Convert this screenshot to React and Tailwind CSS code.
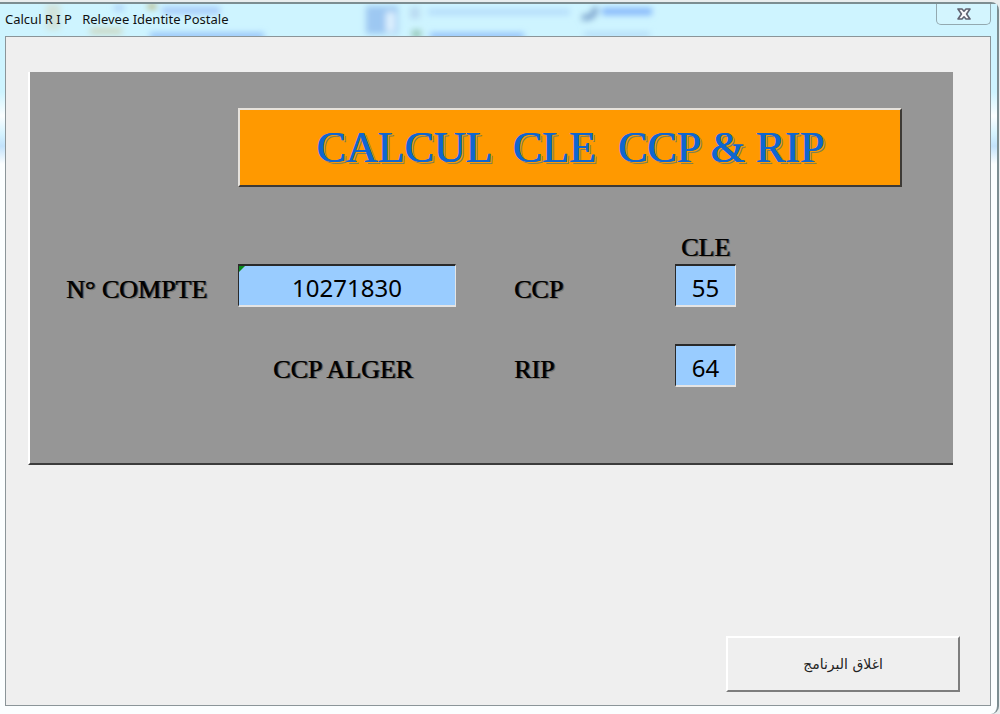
import { useState } from 'react'

const labelClass =
  "font-['Liberation_Serif',serif] text-[26px] leading-8 text-black whitespace-nowrap [text-shadow:1px_0_0_#222,2px_1px_0_#7b7670]"
const cellClass =
  "block h-[43px] w-full min-w-0 rounded-none border border-t-2 border-b-2 border-t-[#2a2a2a] border-l-[#2a2a2a] border-r-[#e4e4e4] border-b-[#e4e4e4] bg-[#99ccff] pt-1 text-center font-['Noto_Sans',sans-serif] text-[24px] leading-8 text-black outline-none"

// cle CCP : somme des chiffres x (position + 4), modulo 100
function cleCcp(compte) {
  const sum = [...compte].reverse().reduce((acc, d, i) => acc + Number(d) * (i + 4), 0)
  return String(sum % 100).padStart(2, '0')
}

// cle RIP : modulo 97
function cleRip(compte) {
  const rest = ((Number(compte) * 100) % 97) + 85
  return String(97 - (rest % 97)).padStart(2, '0')
}

function GlassReflection() {
  return (
    <svg
      className="pointer-events-none absolute top-0 left-0 h-[33px] w-[700px]"
      viewBox="0 0 700 33"
      aria-hidden="true"
    >
      <defs>
        <filter id="soft" filterUnits="userSpaceOnUse" x="0" y="-10" width="700" height="60">
          <feGaussianBlur stdDeviation="3" />
        </filter>
      </defs>
      <g filter="url(#soft)">
        <rect x="46" y="0" width="14" height="26" fill="#d3dccb" opacity=".7" />
        <rect x="90" y="24" width="32" height="6" fill="#ccd6bd" />
        <rect x="114" y="1" width="10" height="6" fill="#9cc2f5" opacity=".7" />
        <rect x="148" y="0" width="8" height="5" fill="#b3ad70" />
        <rect x="162" y="3" width="58" height="7" fill="#a5c9f9" />
        <rect x="150" y="29" width="114" height="6" fill="#8fbdf8" />
        <rect x="366" y="2" width="32" height="28" fill="#9dc8f2" />
        <rect x="386" y="8" width="9" height="20" fill="#dff2ff" />
        <rect x="410" y="3" width="10" height="12" fill="#b9daf2" />
        <rect x="428" y="5" width="142" height="6" fill="#b4dcfb" />
        <rect x="412" y="26" width="9" height="8" fill="#94c6b6" />
        <rect x="430" y="29" width="94" height="6" fill="#8cbcfa" />
        <path d="M582 13c8 2 14-2 13-10" fill="none" stroke="#7fa6cf" strokeWidth="6" />
        <rect x="602" y="4" width="50" height="7" fill="#83b5fb" />
        <rect x="584" y="28" width="66" height="5" fill="#b2daf8" />
      </g>
    </svg>
  )
}

function TitleBar() {
  return (
    <header className="relative flex h-8 items-start justify-between overflow-hidden bg-[#cef4ff] pl-[5px]">
      <GlassReflection />
      <h1 className="relative pt-[5px] font-['Noto_Sans',sans-serif] text-[13px] leading-5 whitespace-pre text-[#111]">
        Calcul R I P{'   '}Relevee Identite Postale
      </h1>
      <button
        type="button"
        aria-label="Fermer"
        className="relative mr-[6px] flex h-[21px] w-[55px] items-center justify-center rounded-b-[5px] border border-t-0 border-[#93a9b0] bg-[#d3f5fe]"
      >
        <svg width="14" height="12" viewBox="0 0 14 12" aria-hidden="true">
          <path
            d="M1 1h4l2 2.2L9 1h4L9.6 6 13 11H9L7 8.8 5 11H1l3.4-5z"
            fill="#f8f8fa"
            stroke="#5f6270"
            strokeWidth="1.6"
            strokeLinejoin="round"
          />
        </svg>
      </button>
    </header>
  )
}

export default function App() {
  const [compte, setCompte] = useState('10271830')

  return (
    <div className="flex min-h-screen flex-col bg-[#e9edee] pt-[2px] pr-px">
      <div className="flex grow flex-col rounded-tr-lg rounded-br-lg border-t-2 border-r-2 border-[#7c8d91] bg-[linear-gradient(180deg,#cef4ff_0,#cef4ff_88px,#fbfeff_112px,#d5f3ff_130px,#c2e2fb_142px,#fbfeff_160px)]">
        <TitleBar />
        <main className="mr-[6px] mb-2 ml-[5px] flex grow flex-col border border-[#8b9599] bg-[#efefef] pt-[35px] pr-[37px] pl-[22px]">
          <section className="grid grid-cols-[172fr_218fr_58fr_161fr_61fr_166fr_51fr] items-center border-b-2 border-l-2 border-b-[#3c3c3c] border-l-white bg-[#969696] pt-9 pb-[76px] pl-9">
            <h2 className="col-span-5 col-start-2 mb-[45px] flex h-[79px] items-center justify-center border-2 border-t-[#e6e2dc] border-r-[#3d3a36] border-b-[#3d3a36] border-l-[#e6e2dc] bg-[#ff9900] font-['Liberation_Serif',serif] text-[44px] leading-none whitespace-pre text-[#0f66d0] [text-shadow:1px_0_0_#0f66d0,2px_1px_0_#ff9900,3px_2px_0_#7d8254]">
              CALCUL{'  '}CLE{'  '}CCP & RIP
            </h2>

            <span className={`${labelClass} col-start-5 flex justify-center`}>CLE</span>

            <label htmlFor="compte" className={`${labelClass} col-start-1 pt-2`}>
              N° COMPTE
            </label>
            <div className="relative">
              <input
                id="compte"
                inputMode="numeric"
                value={compte}
                onChange={(e) => setCompte(e.target.value.replace(/\D/g, ''))}
                className={cellClass}
              />
              <span className="absolute top-[2px] left-px size-[6px] bg-[#0a8a1c] [clip-path:polygon(0_0,100%_0,0_100%)]" />
            </div>
            <label htmlFor="ccp" className={`${labelClass} col-start-4 pt-2`}>
              CCP
            </label>
            <input id="ccp" readOnly value={cleCcp(compte)} className={cellClass} />

            <span className={`${labelClass} col-start-2 mt-[37px] flex justify-center pt-2 pr-2`}>
              CCP ALGER
            </span>
            <label htmlFor="rip" className={`${labelClass} col-start-4 mt-[37px] pt-2`}>
              RIP
            </label>
            <div className="mt-[37px]">
              <input id="rip" readOnly value={cleRip(compte)} className={cellClass} />
            </div>
          </section>

          <div className="mt-auto mb-[13px] flex justify-end">
            <button
              type="button"
              lang="ar"
              dir="rtl"
              className="-mr-[7px] h-14 w-[234px] border-2 border-t-white border-r-[#7d7d7d] border-b-[#7d7d7d] border-l-white bg-[#efefef] font-['DejaVu_Sans',sans-serif] text-[14px] text-[#222]"
            >
              اغلاق البرنامج
            </button>
          </div>
        </main>
      </div>
    </div>
  )
}
